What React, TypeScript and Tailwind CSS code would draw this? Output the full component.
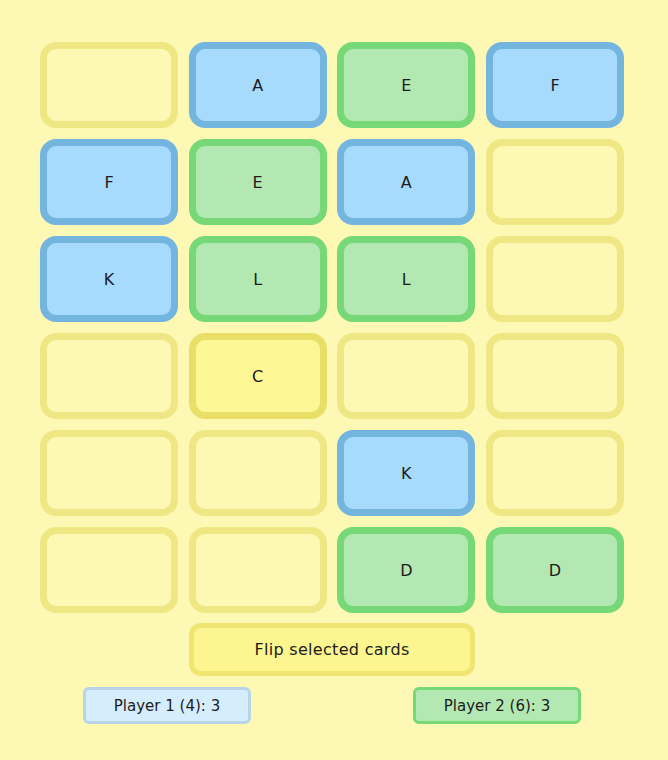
import React from 'react';

type Card = { letter?: string; tone: 'empty' | 'blue' | 'green' | 'picked' };

const rows: Card[][] = [
  [{ tone: 'empty' }, { letter: 'A', tone: 'blue' }, { letter: 'E', tone: 'green' }, { letter: 'F', tone: 'blue' }],
  [{ letter: 'F', tone: 'blue' }, { letter: 'E', tone: 'green' }, { letter: 'A', tone: 'blue' }, { tone: 'empty' }],
  [{ letter: 'K', tone: 'blue' }, { letter: 'L', tone: 'green' }, { letter: 'L', tone: 'green' }, { tone: 'empty' }],
  [{ tone: 'empty' }, { letter: 'C', tone: 'picked' }, { tone: 'empty' }, { tone: 'empty' }],
  [{ tone: 'empty' }, { tone: 'empty' }, { letter: 'K', tone: 'blue' }, { tone: 'empty' }],
  [{ tone: 'empty' }, { tone: 'empty' }, { letter: 'D', tone: 'green' }, { letter: 'D', tone: 'green' }],
];

const toneClass: Record<Card['tone'], string> = {
  empty: 'border-[#efe784] bg-[#fef8b5]',
  blue: 'border-[#74b5df] bg-[#a6dbfd]',
  green: 'border-[#77d877] bg-[#b3e8b3]',
  picked: 'border-[#e9df67] bg-[#fdf795]',
};

export default function App() {
  return (
    <div className="min-h-[760px] w-[668px] bg-[#fef8b5] pt-[42px] text-[#1c1c1c] font-['DejaVu_Sans',sans-serif]">
      <div className="ml-[40px] grid w-[584px] grid-cols-4 gap-x-[10.67px] gap-y-[11px]">
        {rows.flat().map((card, i) => (
          <div
            key={i}
            className={`flex h-[86px] items-center justify-center rounded-[16px] border-[7px] pt-[1px] text-[16px] ${toneClass[card.tone]}`}
          >
            {card.letter}
          </div>
        ))}
      </div>

      <div className="ml-[40px] mt-[10px] flex w-[584px] justify-center">
        <button className="h-[53px] w-[286px] rounded-[12px] border-[5px] border-[#efe570] bg-[#fdf690] pt-[1px] text-[16px] tracking-[0.3px] text-[#1c1c1c]">
          Flip selected cards
        </button>
      </div>

      <div className="mt-[11px] flex gap-[162px] pl-[83px]">
        <div className="flex h-[37px] w-[168px] items-center justify-center rounded-[6px] border-[3px] border-[#b9d4e6] bg-[#d5edfd] pt-[1px] text-[15px]">
          Player 1 (4): 3
        </div>
        <div className="flex h-[37px] w-[168px] items-center justify-center rounded-[6px] border-[3px] border-[#77d877] bg-[#b3e8b3] pt-[1px] text-[15px]">
          Player 2 (6): 3
        </div>
      </div>
    </div>
  );
}
